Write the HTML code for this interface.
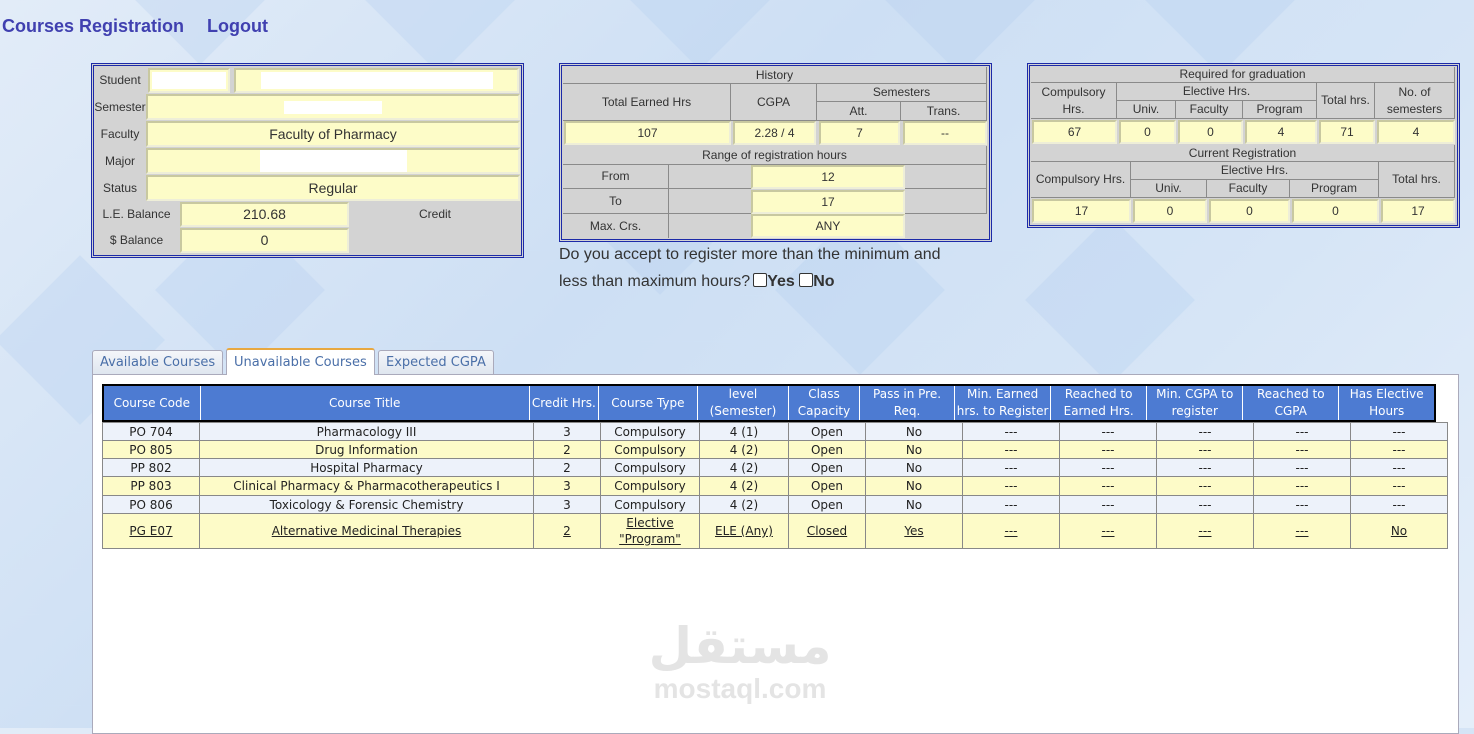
<!DOCTYPE html>
<html><head><meta charset="utf-8"><style>
*{margin:0;padding:0;box-sizing:border-box}
body{width:1474px;height:728px;overflow:hidden;position:relative;font-family:"Liberation Sans",Arial,sans-serif;color:#333;
background:linear-gradient(135deg,#e2ecf8 0%,#cddff4 40%,#d6e5f6 70%,#e4eefa 100%)}
.bg{position:absolute;width:120px;height:120px;transform:rotate(45deg);background:rgba(180,205,240,.3)}
.a{position:absolute;display:flex;align-items:center;justify-content:center;text-align:center;line-height:1.35}
.box{position:absolute;background:#d3d3d3;border:3px double #1c2aa8}
.g{border-right:1px solid #8a8a8a;border-bottom:1px solid #8a8a8a}
.y{background:#fdfcc8;border:2px solid;border-color:#c8c8a0 #eeeed8 #eeeed8 #c8c8a0}
.w{background:#fff}
.top{font-size:12px}
.nav{position:absolute;top:16px;font-size:18px;font-weight:bold;color:#4040b0}
.tab{position:absolute;top:350px;height:24px;font-family:"DejaVu Sans",Verdana,sans-serif;font-size:13px;color:#4a6fa8;border:1px solid #aab;border-bottom:none;background:linear-gradient(#f4f6fa,#dfe6ef);padding:4px 7px 0;border-radius:3px 3px 0 0}
table.c{position:absolute;border-collapse:collapse;font-family:"DejaVu Sans",Verdana,sans-serif;font-size:12px;table-layout:fixed}
table.h{left:102px;top:384px;border:2px solid #000;color:#fff;background:#4d7bd2}
table.h td{border:1px solid #fff;text-align:center;height:36px;line-height:17px;padding:0}
table.b{left:102px;top:422px;color:#222}
table.b td{border:1px solid #888;text-align:center;padding:0;height:18px;line-height:16px}
tr.o td{background:#edf2fa} tr.e td{background:#fdfbc8}
u{text-decoration:underline}
</style></head><body>
<div class="bg" style="left:140px;top:-80px"></div><div class="bg" style="left:380px;top:-70px"></div><div class="bg" style="left:640px;top:-75px"></div><div class="bg" style="left:900px;top:-70px"></div><div class="bg" style="left:1160px;top:-70px"></div>
<div class="bg" style="left:180px;top:230px"></div><div class="bg" style="left:800px;top:230px"></div><div class="bg" style="left:1050px;top:240px"></div><div class="bg" style="left:600px;top:150px"></div><div class="bg" style="left:20px;top:280px"></div>
<div class="nav" style="left:2px">Courses Registration</div>
<div class="nav" style="left:207px">Logout</div>

<!-- Student box -->
<div class="box" style="left:91px;top:63px;width:433px;height:195px"></div>
<div class="top">
<div class="a" style="left:95px;top:67px;width:50px;height:26px">Student</div>
<div class="a y" style="left:148px;top:68px;width:82px;height:25px"><div class="w" style="width:74px;height:17px"></div></div>
<div class="a y" style="left:234px;top:68px;width:285px;height:25px"><div class="w" style="width:232px;height:17px"></div></div>
<div class="a" style="left:93px;top:94px;width:54px;height:26px">Semester</div>
<div class="a y" style="left:146px;top:94px;width:374px;height:26px"><div class="w" style="width:98px;height:13px"></div></div>
<div class="a" style="left:95px;top:121px;width:50px;height:26px">Faculty</div>
<div class="a y" style="left:146px;top:121px;width:374px;height:26px;font-size:14px">Faculty of Pharmacy</div>
<div class="a" style="left:95px;top:148px;width:50px;height:26px">Major</div>
<div class="a y" style="left:146px;top:148px;width:374px;height:26px"><div class="w" style="width:147px;height:22px"></div></div>
<div class="a" style="left:95px;top:175px;width:50px;height:26px">Status</div>
<div class="a y" style="left:146px;top:175px;width:374px;height:26px;font-size:14px">Regular</div>
<div class="a" style="left:95px;top:202px;width:83px;height:24px">L.E. Balance</div>
<div class="a y" style="left:180px;top:202px;width:169px;height:25px;font-size:14px">210.68</div>
<div class="a" style="left:350px;top:202px;width:170px;height:24px">Credit</div>
<div class="a" style="left:95px;top:228px;width:83px;height:24px">$ Balance</div>
<div class="a y" style="left:180px;top:228px;width:169px;height:25px;font-size:14px">0</div>
</div>

<!-- History -->
<div class="box" style="left:559px;top:63px;width:433px;height:179px"></div>
<div class="top">
<div class="a g" style="left:563px;top:67px;width:424px;height:17px">History</div>
<div class="a g" style="left:563px;top:84px;width:168px;height:37px">Total Earned Hrs</div>
<div class="a g" style="left:731px;top:84px;width:86px;height:37px">CGPA</div>
<div class="a g" style="left:817px;top:84px;width:170px;height:18px">Semesters</div>
<div class="a g" style="left:817px;top:102px;width:84px;height:19px">Att.</div>
<div class="a g" style="left:901px;top:102px;width:86px;height:19px">Trans.</div>
<div class="a y" style="left:564px;top:121px;width:167px;height:24px">107</div>
<div class="a y" style="left:733px;top:121px;width:83px;height:24px">2.28 / 4</div>
<div class="a y" style="left:819px;top:121px;width:81px;height:24px">7</div>
<div class="a y" style="left:903px;top:121px;width:84px;height:24px">--</div>
<div class="a g" style="left:563px;top:146px;width:424px;height:19px">Range of registration hours</div>
<div class="a g" style="left:563px;top:165px;width:106px;height:24px">From</div><div class="a g" style="left:669px;top:165px;width:318px;height:24px"></div>
<div class="a y" style="left:751px;top:165px;width:154px;height:24px">12</div>
<div class="a g" style="left:563px;top:189px;width:106px;height:25px">To</div><div class="a g" style="left:669px;top:189px;width:318px;height:25px"></div>
<div class="a y" style="left:751px;top:190px;width:154px;height:24px">17</div>
<div class="a g" style="left:563px;top:214px;width:106px;height:24px;border-bottom:none">Max. Crs.</div>
<div class="a y" style="left:751px;top:214px;width:154px;height:24px">ANY</div>
</div>
<div style="position:absolute;left:559px;top:241px;font-size:16px;line-height:27px;color:#333;width:408px">Do you accept to register more than the minimum and less than maximum hours?<span style="display:inline-block;width:14px;height:14px;border:1px solid #333;background:#fff;border-radius:2px;vertical-align:-1px;margin-left:3px"></span><b>Yes</b> <span style="display:inline-block;width:14px;height:14px;border:1px solid #333;background:#fff;border-radius:2px;vertical-align:-1px"></span><b>No</b></div>

<!-- Graduation -->
<div class="box" style="left:1027px;top:63px;width:433px;height:165px"></div>
<div class="top">
<div class="a g" style="left:1031px;top:67px;width:424px;height:16px">Required for graduation</div>
<div class="a g" style="left:1031px;top:83px;width:86px;height:36px">Compulsory<br>Hrs.</div>
<div class="a g" style="left:1117px;top:83px;width:200px;height:18px">Elective Hrs.</div>
<div class="a g" style="left:1117px;top:101px;width:59px;height:18px">Univ.</div>
<div class="a g" style="left:1176px;top:101px;width:67px;height:18px">Faculty</div>
<div class="a g" style="left:1243px;top:101px;width:74px;height:18px">Program</div>
<div class="a g" style="left:1317px;top:83px;width:58px;height:36px">Total hrs.</div>
<div class="a g" style="left:1375px;top:83px;width:80px;height:36px">No. of<br>semesters</div>
<div class="a y" style="left:1032px;top:120px;width:85px;height:24px">67</div>
<div class="a y" style="left:1119px;top:120px;width:57px;height:24px">0</div>
<div class="a y" style="left:1178px;top:120px;width:65px;height:24px">0</div>
<div class="a y" style="left:1245px;top:120px;width:72px;height:24px">4</div>
<div class="a y" style="left:1319px;top:120px;width:56px;height:24px">71</div>
<div class="a y" style="left:1377px;top:120px;width:78px;height:24px">4</div>
<div class="a g" style="left:1031px;top:145px;width:424px;height:17px">Current Registration</div>
<div class="a g" style="left:1031px;top:162px;width:100px;height:36px">Compulsory Hrs.</div>
<div class="a g" style="left:1131px;top:162px;width:248px;height:18px">Elective Hrs.</div>
<div class="a g" style="left:1131px;top:180px;width:76px;height:18px">Univ.</div>
<div class="a g" style="left:1207px;top:180px;width:83px;height:18px">Faculty</div>
<div class="a g" style="left:1290px;top:180px;width:89px;height:18px">Program</div>
<div class="a g" style="left:1379px;top:162px;width:76px;height:36px">Total hrs.</div>
<div class="a y" style="left:1032px;top:199px;width:99px;height:24px">17</div>
<div class="a y" style="left:1133px;top:199px;width:74px;height:24px">0</div>
<div class="a y" style="left:1209px;top:199px;width:81px;height:24px">0</div>
<div class="a y" style="left:1292px;top:199px;width:87px;height:24px">0</div>
<div class="a y" style="left:1381px;top:199px;width:74px;height:24px">17</div>
</div>

<!-- Panel -->
<div style="position:absolute;left:92px;top:374px;width:1367px;height:360px;background:#fff;border:1px solid #aab"></div>
<div class="tab" style="left:92px">Available Courses</div>
<div class="tab" style="left:226px;top:348px;height:27px;background:#fff;color:#4a6fa8;border-color:#e0a040 #aab #fff;border-top:2px solid #e8a840;padding-top:5px">Unavailable Courses</div>
<div class="tab" style="left:378px">Expected CGPA</div>

<table class="c h" style="width:1334px">
<colgroup><col style="width:97px"><col style="width:329px"><col style="width:69px"><col style="width:99px"><col style="width:91px"><col style="width:71px"><col style="width:95px"><col style="width:96px"><col style="width:96px"><col style="width:96px"><col style="width:96px"><col style="width:96px"></colgroup>
<tr><td>Course Code</td><td>Course Title</td><td>Credit Hrs.</td><td>Course Type</td><td>level<br>(Semester)</td><td>Class<br>Capacity</td><td>Pass in Pre.<br>Req.</td><td>Min. Earned<br>hrs. to Register</td><td>Reached to<br>Earned Hrs.</td><td>Min. CGPA to<br>register</td><td>Reached to<br>CGPA</td><td>Has Elective<br>Hours</td></tr>
</table>
<table class="c b" style="width:1345px">
<colgroup><col style="width:97px"><col style="width:334px"><col style="width:67px"><col style="width:99px"><col style="width:89px"><col style="width:77px"><col style="width:97px"><col style="width:97px"><col style="width:97px"><col style="width:97px"><col style="width:97px"><col style="width:97px"></colgroup>
<tr class="o"><td>PO 704</td><td>Pharmacology III</td><td>3</td><td>Compulsory</td><td>4 (1)</td><td>Open</td><td>No</td><td>---</td><td>---</td><td>---</td><td>---</td><td>---</td></tr>
<tr class="e"><td>PO 805</td><td>Drug Information</td><td>2</td><td>Compulsory</td><td>4 (2)</td><td>Open</td><td>No</td><td>---</td><td>---</td><td>---</td><td>---</td><td>---</td></tr>
<tr class="o"><td>PP 802</td><td>Hospital Pharmacy</td><td>2</td><td>Compulsory</td><td>4 (2)</td><td>Open</td><td>No</td><td>---</td><td>---</td><td>---</td><td>---</td><td>---</td></tr>
<tr class="e"><td style="height:19px">PP 803</td><td>Clinical Pharmacy &amp; Pharmacotherapeutics I</td><td>3</td><td>Compulsory</td><td>4 (2)</td><td>Open</td><td>No</td><td>---</td><td>---</td><td>---</td><td>---</td><td>---</td></tr>
<tr class="o"><td>PO 806</td><td>Toxicology &amp; Forensic Chemistry</td><td>3</td><td>Compulsory</td><td>4 (2)</td><td>Open</td><td>No</td><td>---</td><td>---</td><td>---</td><td>---</td><td>---</td></tr>
<tr class="e"><td style="height:35px"><u>PG E07</u></td><td><u>Alternative Medicinal Therapies</u></td><td><u>2</u></td><td><u>Elective</u><br><u>"Program"</u></td><td><u>ELE (Any)</u></td><td><u>Closed</u></td><td><u>Yes</u></td><td><u>---</u></td><td><u>---</u></td><td><u>---</u></td><td><u>---</u></td><td><u>No</u></td></tr>
</table>

<div style="position:absolute;left:630px;top:618px;width:220px;text-align:center;color:#e4e4e4;font-weight:bold">
<div style="font-size:50px;line-height:56px;font-family:'DejaVu Sans',sans-serif">مستقل</div>
<div style="font-size:28px;line-height:30px">mostaql.com</div></div>
</body></html>
